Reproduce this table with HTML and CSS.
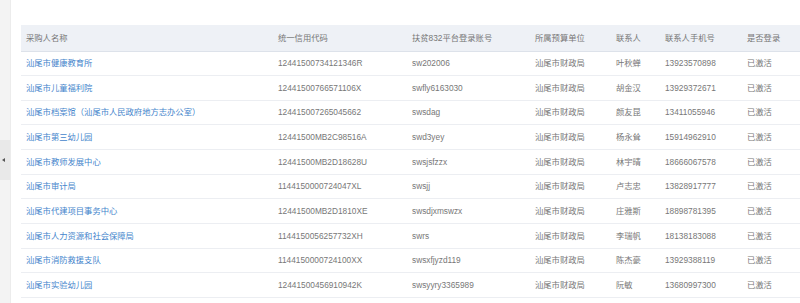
FILE: index.html
```html
<!DOCTYPE html>
<html lang="zh-CN">
<head>
  <meta charset="UTF-8" />
  <meta name="viewport" content="width=device-width, initial-scale=1" />
  <title>采购人列表</title>
  <link rel="stylesheet" href="styles.css">
</head>
<body>
  <aside class="side">
    <div class="side-toggle"><span class="arrow"></span></div>
  </aside>
  <main class="content">
    <table class="list">
      <colgroup>
        <col class="c-name" />
        <col class="c-code" />
        <col class="c-acct" />
        <col class="c-unit" />
        <col class="c-person" />
        <col class="c-phone" />
        <col class="c-state" />
      </colgroup>
      <thead>
        <tr>
          <th>采购人名称</th>
          <th>统一信用代码</th>
          <th>扶贫832平台登录账号</th>
          <th>所属预算单位</th>
          <th>联系人</th>
          <th>联系人手机号</th>
          <th>是否登录</th>
        </tr>
      </thead>
      <tbody>
        <tr>
          <td><a href="#" class="name">汕尾市健康教育所</a></td>
          <td>12441500734121346R</td>
          <td>sw202006</td>
          <td>汕尾市财政局</td>
          <td>叶秋蝉</td>
          <td>13923570898</td>
          <td>已激活</td>
        </tr>
        <tr>
          <td><a href="#" class="name">汕尾市儿童福利院</a></td>
          <td>12441500766571106X</td>
          <td>swfly6163030</td>
          <td>汕尾市财政局</td>
          <td>胡金汉</td>
          <td>13929372671</td>
          <td>已激活</td>
        </tr>
        <tr>
          <td><a href="#" class="name">汕尾市档案馆（汕尾市人民政府地方志办公室）</a></td>
          <td>124415007265045662</td>
          <td>swsdag</td>
          <td>汕尾市财政局</td>
          <td>颜友昆</td>
          <td>13411055946</td>
          <td>已激活</td>
        </tr>
        <tr>
          <td><a href="#" class="name">汕尾市第三幼儿园</a></td>
          <td>12441500MB2C98516A</td>
          <td>swd3yey</td>
          <td>汕尾市财政局</td>
          <td>杨永耸</td>
          <td>15914962910</td>
          <td>已激活</td>
        </tr>
        <tr>
          <td><a href="#" class="name">汕尾市教师发展中心</a></td>
          <td>12441500MB2D18628U</td>
          <td>swsjsfzzx</td>
          <td>汕尾市财政局</td>
          <td>林宇晴</td>
          <td>18666067578</td>
          <td>已激活</td>
        </tr>
        <tr>
          <td><a href="#" class="name">汕尾市审计局</a></td>
          <td>1144150000724047XL</td>
          <td>swsjj</td>
          <td>汕尾市财政局</td>
          <td>卢志忠</td>
          <td>13828917777</td>
          <td>已激活</td>
        </tr>
        <tr>
          <td><a href="#" class="name">汕尾市代建项目事务中心</a></td>
          <td>12441500MB2D1810XE</td>
          <td>swsdjxmswzx</td>
          <td>汕尾市财政局</td>
          <td>庄雅斯</td>
          <td>18898781395</td>
          <td>已激活</td>
        </tr>
        <tr>
          <td><a href="#" class="name">汕尾市人力资源和社会保障局</a></td>
          <td>1144150056257732XH</td>
          <td>swrs</td>
          <td>汕尾市财政局</td>
          <td>李瑞帆</td>
          <td>18138183088</td>
          <td>已激活</td>
        </tr>
        <tr>
          <td><a href="#" class="name">汕尾市消防救援支队</a></td>
          <td>1144150000724100XX</td>
          <td>swsxfjyzd119</td>
          <td>汕尾市财政局</td>
          <td>陈杰豪</td>
          <td>13929388119</td>
          <td>已激活</td>
        </tr>
        <tr>
          <td><a href="#" class="name">汕尾市实验幼儿园</a></td>
          <td>12441500456910942K</td>
          <td>swsyyry3365989</td>
          <td>汕尾市财政局</td>
          <td>阮敏</td>
          <td>13680997300</td>
          <td>已激活</td>
        </tr>
      </tbody>
    </table>
  </main>
</body>
</html>
```

FILE: styles.css
```css
    :root {
      --font-sans: 'Liberation Sans', 'Noto Sans CJK SC', sans-serif;
      --color-text: #777;
      --color-link: #4585cc;
      --head-bg: #eef1f6;
      --head-line: #dde2ea;
      --row-line: #eceef2;
      --side-bg: #f3f3f3;
    }
    *, *::before, *::after { box-sizing: border-box; }

    html, body {
      margin: 0;
      padding: 0;
      width: 100%;
      height: 100%;
      overflow: hidden;
      background: #fff;
    }
    body {
      display: flex;
      font-family: var(--font-sans);
      font-size: 8.3px;
      color: var(--color-text);
    }

    /* linke Leiste */
    .side {
      flex: 0 0 11px;
      background: var(--side-bg);
      border-right: 1px solid #ececec;
      padding-top: 140px;
    }
    .side-toggle {
      height: 40px;
      background: #e9e9e9;
      display: flex;
      align-items: center;
      padding-left: 2px;
    }
    .arrow {
      width: 0; height: 0;
      border-top: 2.5px solid transparent;
      border-bottom: 2.5px solid transparent;
      border-right: 3px solid #555;
    }

    .content {
      flex: 1;
      min-width: 0;
      overflow: hidden;
      padding: 25px 0 0 10px;
    }

    .list {
      width: 820px;
      table-layout: fixed;
      border-collapse: collapse;
    }
    .c-name { width: 252px; }
    .c-code { width: 134px; }
    .c-acct { width: 123px; }
    .c-unit { width: 81px; }
    .c-person { width: 49px; }
    .c-phone { width: 82px; }
    .c-state { width: 99px; }

    .list th, .list td {
      padding: 0 0 0 5px;
      text-align: left;
      white-space: nowrap;
      overflow: hidden;
      line-height: 1;
    }
    .list th {
      height: 26px;
      background: var(--head-bg);
      border-bottom: 1px solid var(--head-line);
      font-weight: normal;
      color: var(--color-text);
    }
    .list td {
      height: 24.67px;
      border-bottom: 1px solid var(--row-line);
    }
    .name {
      color: var(--color-link);
      text-decoration: none;
    }
```
